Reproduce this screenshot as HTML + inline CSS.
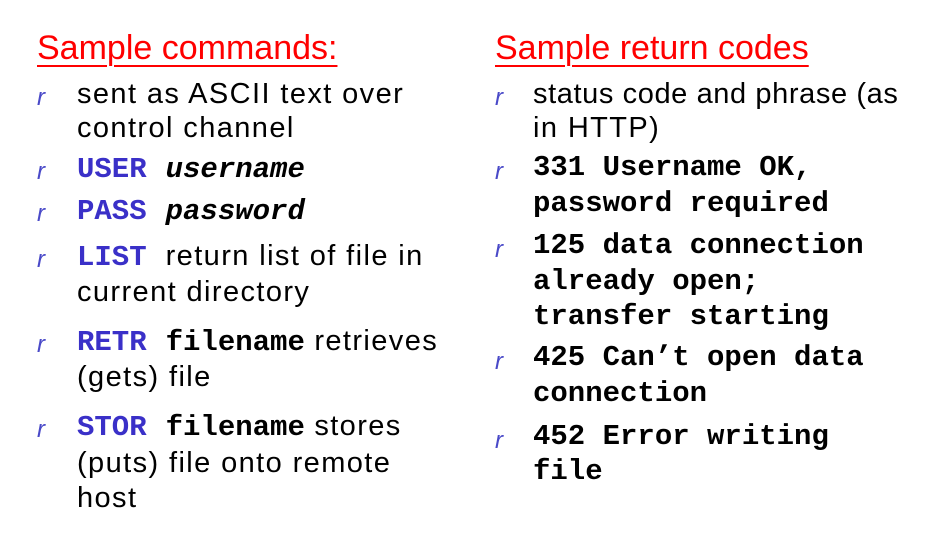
<!DOCTYPE html>
<html><head><meta charset="utf-8"><style>
body{margin:0;width:946px;height:553px;background:#fff;position:relative;overflow:hidden;font-family:"Liberation Sans",sans-serif;}
.l{position:absolute;line-height:34px;height:34px;white-space:nowrap;font-size:29px;letter-spacing:1.4px;color:#000;}
.t{position:absolute;font-size:34px;color:#ff0000;line-height:40px;white-space:nowrap;text-decoration:underline;text-decoration-thickness:2px;text-underline-offset:6px;}
.b{position:absolute;font-family:"Liberation Sans",sans-serif;font-style:italic;font-size:24px;color:#4a4ac8;line-height:34px;}
.m{font-family:"Liberation Mono",monospace;font-weight:bold;font-size:29px;letter-spacing:0;}
.k{color:#3a30c8;margin-right:19px;}
i.m{font-style:italic;}
</style></head><body>
<div class="t" style="left:37px;top:28px">Sample commands:</div>
<div class="t" style="left:495px;top:28px">Sample return codes</div>

<div class="b" style="left:37px;top:81px">r</div>
<div class="l" style="left:77px;top:77px">sent as ASCII text over</div>
<div class="l" style="left:77px;top:111px">control channel</div>
<div class="b" style="left:37px;top:155px">r</div>
<div class="l" style="left:77px;top:151px"><span class="m k">USER</span><i class="m">username</i></div>
<div class="b" style="left:37px;top:197px">r</div>
<div class="l" style="left:77px;top:193px"><span class="m k">PASS</span><i class="m">password</i></div>
<div class="b" style="left:37px;top:243px">r</div>
<div class="l" style="left:77px;top:239px"><span class="m k">LIST</span>return list of file in</div>
<div class="l" style="left:77px;top:275px">current directory</div>
<div class="b" style="left:37px;top:328px">r</div>
<div class="l" style="left:77px;top:324px"><span class="m k">RETR</span><span class="m">filename</span> retrieves</div>
<div class="l" style="left:77px;top:360px">(gets) file</div>
<div class="b" style="left:37px;top:413px">r</div>
<div class="l" style="left:77px;top:409px"><span class="m k">STOR</span><span class="m">filename</span> stores</div>
<div class="l" style="left:77px;top:446px">(puts) file onto remote</div>
<div class="l" style="left:77px;top:481px">host</div>

<div class="b" style="left:495px;top:81px">r</div>
<div class="l" style="left:533px;top:77px;letter-spacing:0.6px">status code and phrase (as</div>
<div class="l" style="left:533px;top:111px">in HTTP)</div>
<div class="b" style="left:495px;top:155px">r</div>
<div class="l m" style="left:533px;top:151px">331 Username OK,</div>
<div class="l m" style="left:533px;top:187px">password required</div>
<div class="b" style="left:495px;top:233px">r</div>
<div class="l m" style="left:533px;top:229px">125 data connection</div>
<div class="l m" style="left:533px;top:265px">already open;</div>
<div class="l m" style="left:533px;top:300px">transfer starting</div>
<div class="b" style="left:495px;top:345px">r</div>
<div class="l m" style="left:533px;top:341px">425 Can’t open data</div>
<div class="l m" style="left:533px;top:377px">connection</div>
<div class="b" style="left:495px;top:424px">r</div>
<div class="l m" style="left:533px;top:420px">452 Error writing</div>
<div class="l m" style="left:533px;top:455px">file</div>
</body></html>
